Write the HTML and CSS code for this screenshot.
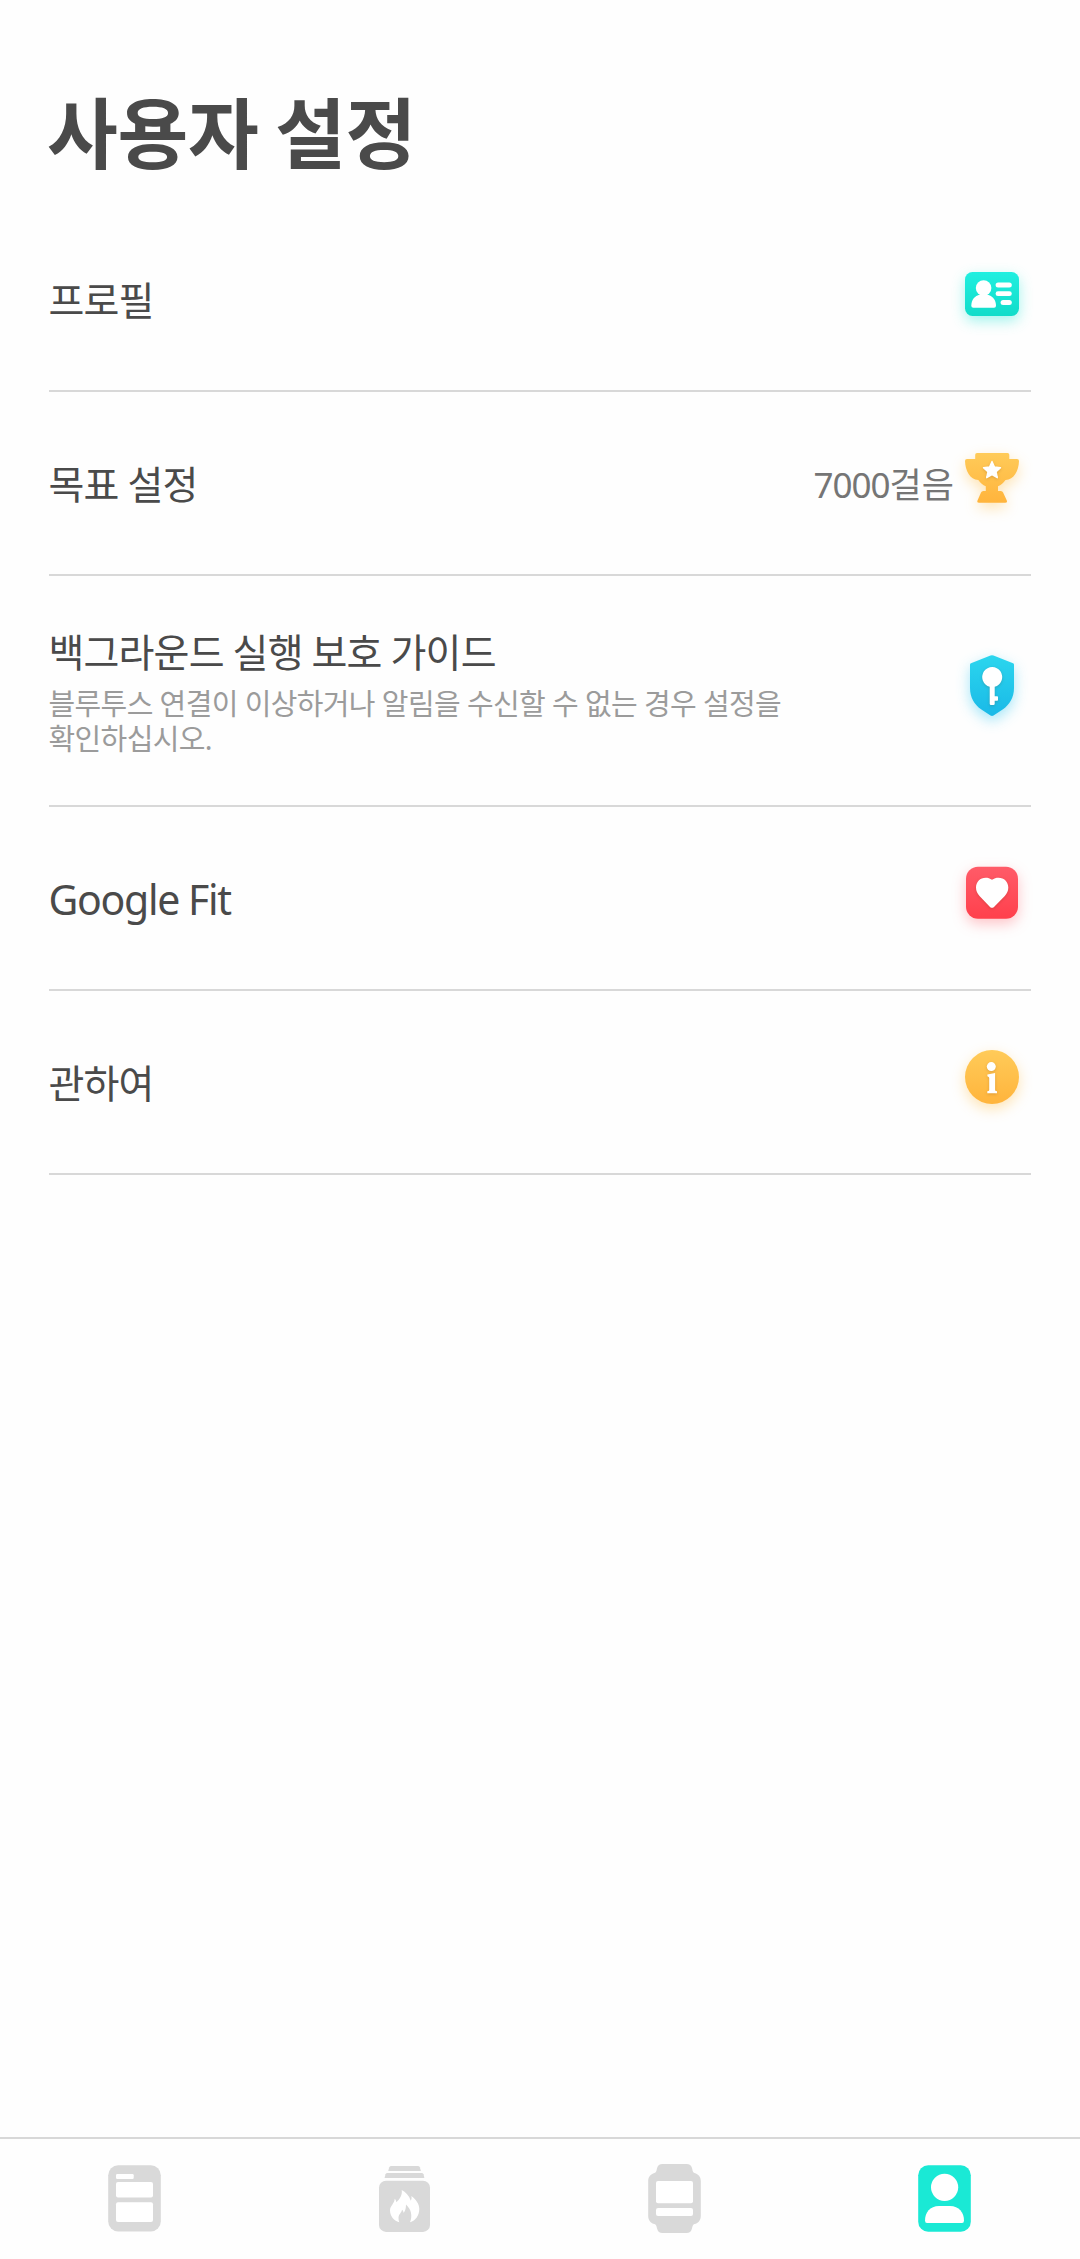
FILE: index.html
```html
<!DOCTYPE html>
<html lang="ko">
<head>
<meta charset="utf-8">
<title>사용자 설정</title>
<link rel="stylesheet" href="styles.css">
</head>
<body>
<main class="page">
  <h1 class="title">사용자 설정</h1>
  <ul class="list">
    <li class="row">
      <span class="label">프로필</span>
      <svg class="icon glow-teal" width="78" height="78" viewBox="0 0 78 78">
        <defs><linearGradient id="teal" x1="0" y1="0" x2="0" y2="1"><stop offset="0" stop-color="#20efe0"/><stop offset="1" stop-color="#12dcc9"/></linearGradient></defs>
        <rect x="12" y="12" width="54" height="44" rx="7.5" fill="url(#teal)"/>
        <g fill="#fff">
          <circle cx="30.6" cy="28" r="7.8"/>
          <path d="M27 34.5h7.200c5.500 1.500 8.800 5.500 8.800 11.200q0 2-2 2H20.300q-2 0-2-2c0-5.700 3.200-9.700 8.700-11.200z"/>
          <rect x="42.600" y="22.600" width="16.200" height="5" rx="2.500"/>
          <rect x="42.600" y="31.300" width="16.200" height="4.800" rx="2.400"/>
          <rect x="47.600" y="40" width="11.200" height="5" rx="2.500"/>
        </g>
      </svg>
    </li>
    <li class="row">
      <span class="label">목표 설정</span>
      <span class="value"><span class="number">7000</span>걸음</span>
      <svg class="icon glow-amber" width="78" height="78" viewBox="0 0 78 78">
        <defs><linearGradient id="amber" x1="0" y1="0" x2="0" y2="1"><stop offset="0" stop-color="#ffcb59"/><stop offset="1" stop-color="#ffb43c"/></linearGradient></defs>
        <path fill="url(#amber)" d="M24 9h30.500q1.800 0 1.800 1.800V15H64q2 0 2 2c-.3 10-5 18.500-13.500 19-2 3-4.500 5-7.500 6.300V47h2.800q1.700 0 2.300 1.500l3.700 8q.8 2.200-1.500 2.200H26q-2.300 0-1.500-2.200l3.500-8q.6-1.500 2.300-1.500h2.500v-4.700c-3-1.300-5.500-3.300-7.500-6.300C17 35.500 12.300 27 12 17q0-2 2-2h8.200v-4.200Q22.200 9 24 9z"/>
        <path class="mark" d="M39 17.500l2.500 5.500 6 .7-4.400 4.100 1.200 5.900-5.300-3-5.300 3 1.200-5.900-4.400-4.100 6-.7z" fill="#fff" stroke="#fff" stroke-width="1.400" stroke-linejoin="round"/>
      </svg>
    </li>
    <li class="row row-tall">
      <div class="text">
        <span class="label">백그라운드 실행 보호 가이드</span>
        <p class="note">블루투스 연결이 이상하거나 알림을 수신할 수 없는 경우 설정을 확인하십시오.</p>
      </div>
      <svg class="icon glow-blue" width="78" height="79" viewBox="0 0 78 79">
        <defs><linearGradient id="blue" x1="0" y1="0" x2="0" y2="1"><stop offset="0" stop-color="#2bd6ee"/><stop offset="1" stop-color="#1ab9e7"/></linearGradient></defs>
        <path fill="url(#blue)" d="M37.500 4.500q1.500-.7 3 0L60 12.200q1 .4 1 1.500V37c0 10-4.500 16.500-11 21.300l-9.500 6.200q-1.500.9-3 0L28 58.300C21.500 53.500 17 47 17 37V13.700q0-1.100 1-1.500z"/>
        <path class="mark" fill="#fff" d="M36.700 35.700a10 10 0 1 1 5 0v9.500h2.500q.8 0 .8.800v2.900q0 .8-.8.800h-2.500v3q0 1.300-1.300 1.300H38q-1.300 0-1.300-1.300z"/>
      </svg>
    </li>
    <li class="row">
      <span class="label latin">Google Fit</span>
      <svg class="icon glow-red" width="78" height="78" viewBox="0 0 78 78">
        <defs><linearGradient id="red" x1="0" y1="0" x2="0" y2="1"><stop offset="0" stop-color="#ff5b68"/><stop offset="1" stop-color="#ff404c"/></linearGradient></defs>
        <rect x="13" y="7.800" width="52" height="52" rx="12" fill="url(#red)"/>
        <path class="mark" fill="#fff" d="M39 20.800c2-1.500 4.200-2.100 6.500-2.100 5.700 0 9.800 4.200 9.800 9.800 0 3.300-1.300 6.200-3.500 8.400L41 47.900q-2 1.900-4 0L26.500 36.900C24.300 34.700 23 31.800 23 28.500c0-5.600 4.100-9.800 9.700-9.800 2.300 0 4.300.6 6.300 2.100z"/>
      </svg>
    </li>
    <li class="row">
      <span class="label">관하여</span>
      <svg class="icon glow-amber" width="78" height="78" viewBox="0 0 78 78">
        <circle cx="39" cy="34" r="27" fill="url(#amber)"/>
        <g class="mark" fill="#fff">
          <circle cx="38.300" cy="23.600" r="4.500"/>
          <path d="M34.400 31.500l7.700-1.500v17q0 .9 1 1l.9.200v2.100h-9.700v-2.100l.9-.2q1-.1 1-1V35q0-1.200-1.800-1.700z"/>
        </g>
      </svg>
    </li>
  </ul>
</main>
<nav class="tabs">
  <a class="tab">
    <svg width="60" height="80" viewBox="0 0 60 80">
      <rect x="3.200" y="6.200" width="52.600" height="66.300" rx="10" fill="currentColor"/>
      <g fill="#fff"><rect x="11" y="15" width="17.700" height="5" rx="1.200"/><rect x="11" y="23" width="37" height="15.500" rx="2"/><rect x="11" y="43.200" width="37" height="19.800" rx="2"/></g>
    </svg>
  </a>
  <a class="tab">
    <svg width="60" height="80" viewBox="0 0 60 80">
      <g fill="currentColor"><path d="M16.300 7h26.500q1.500 0 2 1.300L45.900 12H13.200l1.100-3.700q.5-1.300 2-1.300z"/><path d="M12.500 14h34q1.500 0 2 1.300l.9 3.700H9.600l.9-3.700q.5-1.300 2-1.300z"/><rect x="4" y="21.700" width="51" height="51.200" rx="7"/></g>
      <path fill="#fff" d="M26.700 31c4 2 7.300 5.500 9.100 10.700.8-1.500 1-2.800.5-4.700C41 40.500 44.300 45 44.300 50c0 6.500-3.700 11.500-9.300 13.300 2.700-6.300 1.300-13-4-17.800 0 3.800-.8 6.500-2.300 8.500-.3-1.700-.8-2.700-1.700-3.300-.3 2.800-3.300 4.300-3.500 8 0 1.700.2 3.300.8 4.600C18.500 61.300 15 57 15 51.200c0-4.200 4.500-6.700 4.700-11.400 1 1 1.500 2 1.600 3.500 3.500-3.300 6.200-7.300 5.400-12.300z"/>
    </svg>
  </a>
  <a class="tab">
    <svg width="60" height="80" viewBox="0 0 60 80">
      <path fill="currentColor" d="M17.500 5h24c3 0 4.800 1.500 5.500 4l.7 3q.3 1.500 1.800 1.900c4 1 6.300 4.100 6.300 8.100v35c0 4-2.300 7.100-6.300 8.100q-1.500.4-1.900 1.900l-.8 3c-.7 2.500-2.300 4-5.300 4h-24c-3 0-4.600-1.500-5.300-4l-.8-3q-.4-1.500-1.900-1.900c-4-1-6.300-4.100-6.300-8.100V22c0-4 2.300-7.100 6.300-8.100q1.500-.4 1.900-1.900l.7-3c.7-2.500 2.400-4 5.400-4z"/>
      <g fill="#fff"><rect x="11" y="22" width="37" height="22.300" rx="2"/><rect x="11" y="49" width="37" height="8" rx="2"/></g>
    </svg>
  </a>
  <a class="tab tab-active">
    <svg width="60" height="80" viewBox="0 0 60 80">
      <rect x="3.200" y="6.200" width="52.600" height="66.500" rx="10" fill="currentColor"/>
      <g fill="#fff"><circle cx="29.600" cy="28.300" r="13.600"/><path d="M24 47h11c9 0 14 6.500 14 14.500q0 2.500-2 2.500H12q-2 0-2-2.500C10 53.500 15 47 24 47z"/></g>
    </svg>
  </a>
</nav>
</body>
</html>
```
FILE: styles.css
```css
* { box-sizing: border-box; }
body {
  margin: 0;
  height: 2259px;
  display: flex;
  flex-direction: column;
  background: #fefefe;
  color: #4a4a4a;
  font-family: "Noto Sans", "Noto Sans CJK KR", sans-serif;
}
.page { flex: 1; padding: 0 49px; }
.title {
  margin: 0 0 0 -2px;
  height: 208px;
  padding-top: 75px;
  font-family: "Noto Sans CJK KR", sans-serif;
  font-size: 77px;
  font-weight: 700;
  line-height: 110px;
  letter-spacing: -0.4px;
  word-spacing: -4.5px;
}
.list { margin: 0; padding: 0; list-style: none; }
.row {
  display: flex;
  align-items: center;
  height: 184px;
  border-bottom: 2px solid #d8d8d8;
}
.row-tall { height: 231px; }
.label {
  flex: 1;
  padding-top: 2px;
  margin-left: -0.5px;
  font-size: 39px;
  line-height: 52px;
  letter-spacing: -0.84px;
  word-spacing: -0.4px;
}
.latin { font-size: 41px; letter-spacing: -1.3px; }
.text { flex: 1; display: flex; flex-direction: column; gap: 8px; }
.text .label { padding-top: 0; }
.note {
  margin: 0 0 0 -0.5px;
  width: 760px;
  color: #9b9b9b;
  font-size: 29px;
  line-height: 35px;
  letter-spacing: -0.63px;
}
.value { padding-top: 3px; margin-right: -1px; color: #757575; font-size: 35px; line-height: 50px; }
.number { letter-spacing: -1px; }
.icon { flex: none; overflow: visible; }
.glow-teal { filter: drop-shadow(0 5px 7px rgba(24, 230, 212, 0.4)); }
.glow-amber { filter: drop-shadow(0 5px 7px rgba(255, 190, 70, 0.4)); }
.glow-blue { filter: drop-shadow(0 5px 7px rgba(30, 195, 240, 0.4)); }
.glow-red { filter: drop-shadow(0 5px 7px rgba(255, 70, 85, 0.32)); }
.mark { filter: drop-shadow(0 1px 1.5px rgba(90, 40, 0, 0.2)); }
.tabs {
  display: flex;
  height: 122px;
  border-top: 2px solid #d8d8d8;
}
.tab {
  flex: 1;
  display: flex;
  align-items: center;
  justify-content: center;
  color: #d9d9d9;
}
.tab-active { color: #1ae9d5; }
```
